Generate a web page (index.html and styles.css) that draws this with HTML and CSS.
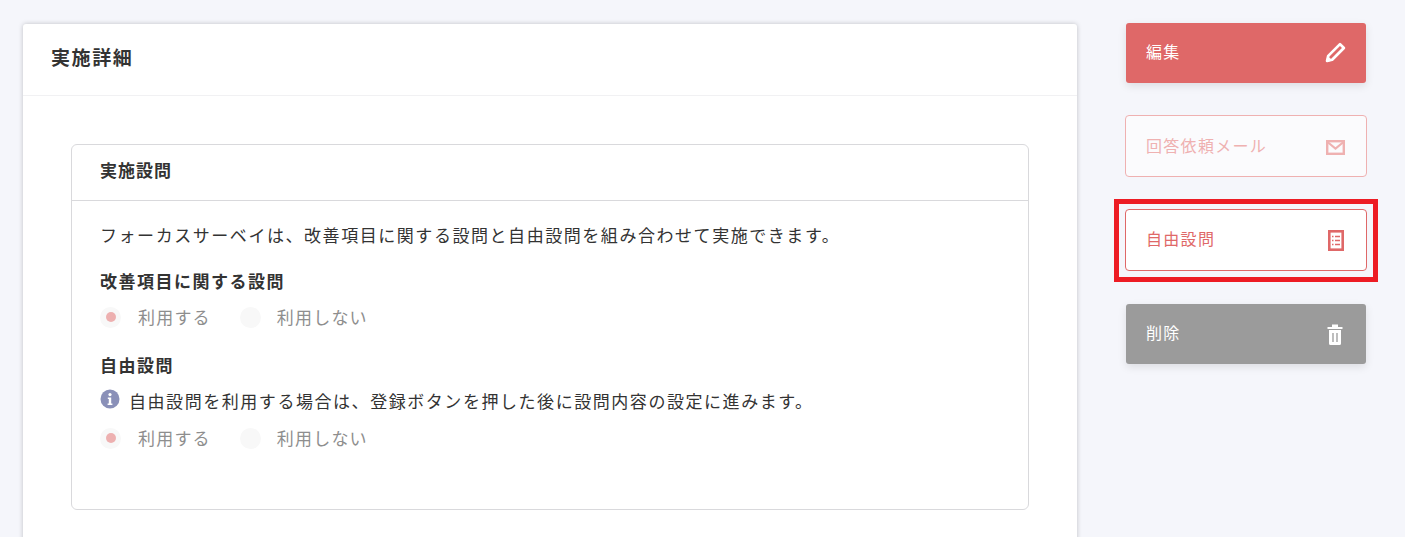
FILE: index.html
```html
<!DOCTYPE html>
<html lang="ja">
<head>
  <meta charset="UTF-8">
  <meta name="viewport" content="width=device-width, initial-scale=1.0">
  <title>実施詳細</title>
  <link rel="stylesheet" href="styles.css">
</head>
<body>
  <div class="page">
    <main class="card">
      <h1 class="card-title">実施詳細</h1>
      <div class="card-body">
        <section class="panel">
          <h2 class="panel-title">実施設問</h2>
          <div class="panel-body">
            <p class="lead">フォーカスサーベイは、改善項目に関する設問と自由設問を組み合わせて実施できます。</p>

            <h3 class="field-label">改善項目に関する設問</h3>
            <div class="radios">
              <span class="radio"><i class="dot checked"></i>利用する</span>
              <span class="radio"><i class="dot"></i>利用しない</span>
            </div>

            <h3 class="field-label second">自由設問</h3>
            <p class="note">
              <svg class="info-icon" viewBox="0 0 20 20" width="20" height="20">
                <circle cx="10" cy="10" r="9.5" fill="#8a90b8"/>
                <circle cx="10" cy="5.600" r="1.600" fill="#fff"/>
                <path d="M7.800 8.400h3.400v6h1.200v1.500H7.600v-1.500h1.200V9.900H7.800z" fill="#fff"/>
              </svg>
              自由設問を利用する場合は、登録ボタンを押した後に設問内容の設定に進みます。
            </p>
            <div class="radios">
              <span class="radio"><i class="dot checked"></i>利用する</span>
              <span class="radio"><i class="dot"></i>利用しない</span>
            </div>
          </div>
        </section>
      </div>
    </main>

    <aside class="actions">
      <a class="btn btn-edit">編集
        <svg viewBox="0 0 20 20" width="21" height="21">
          <path d="M14.300 2l3.700 3.700L6.800 16.900 2 18l1.100-4.800z" fill="none" stroke="#fff" stroke-width="2.600" stroke-linejoin="round"/>
          <path d="M1 19l1.300-6 4.700 4.700z" fill="#fff"/>
        </svg>
      </a>
      <a class="btn btn-mail">回答依頼メール
        <svg viewBox="0 0 19 15" width="19" height="15">
          <rect x="1.200" y="1.200" width="16.600" height="12.600" fill="none" stroke="#efb1b1" stroke-width="2.400"/>
          <path d="M1.500 2l8 6.500 8-6.500" fill="none" stroke="#efb1b1" stroke-width="2.200"/>
        </svg>
      </a>
      <div class="highlight">
        <a class="btn btn-free">自由設問
          <svg viewBox="0 0 16 21" width="16" height="21">
            <rect x="1.300" y="1.300" width="13.400" height="18.400" fill="none" stroke="#df6868" stroke-width="2.600"/>
            <path d="M4 6.500h1.500M4 10.500h1.500M4 14.500h1.500M7 6.500h5M7 10.500h5M7 14.500h5" stroke="#df6868" stroke-width="1.600"/>
          </svg>
        </a>
      </div>
      <a class="btn btn-delete">削除
        <svg viewBox="0 0 16 21" width="16" height="21">
          <path d="M0.500 3h15v2H.5zM5 .5h6V3H5z" fill="#fff"/>
          <path d="M2 6h12v13.500a1.500 1.500 0 0 1-1.500 1.500h-9A1.500 1.500 0 0 1 2 19.500z" fill="#fff"/>
          <path d="M6 9v9M10 9v9" stroke="#9b9b9b" stroke-width="1.300"/>
        </svg>
      </a>
    </aside>
  </div>
</body>
</html>
```

FILE: styles.css
```css
html, body {
  height: 100%;
  overflow: hidden;
}

body {
  margin: 0;
  font-family: "Noto Sans CJK JP", "Noto Sans", sans-serif;
  background-color: #f5f6fb;
  color: #333;
}

.page {
  display: flex;
  align-items: flex-start;
  padding: 23px 39px 0 23px;
}

.card {
  width: 1054px;
  flex-shrink: 0;
  margin-top: 1px;
  background-color: #fff;
  border-radius: 3px;
  box-shadow: 0 0 5px rgba(0, 0, 0, 0.22);
}

.card-title {
  margin: 0;
  height: 71px;
  padding-left: 28px;
  line-height: 66px;
  font-size: 19px;
  font-weight: 700;
  letter-spacing: 1.600px;
  border-bottom: 1px solid #f1f1f3;
}

.card-body {
  padding: 48px 48px 40px;
}

.panel {
  height: 364px;
  background-color: #fff;
  border: 1px solid #d9d9dc;
  border-radius: 6px;
}

.panel-title {
  margin: 0;
  height: 55px;
  padding-left: 28px;
  line-height: 49px;
  font-size: 17px;
  font-weight: 700;
  letter-spacing: 1px;
  border-bottom: 1px solid #d9d9dc;
}

.panel-body {
  padding: 22px 28px 0;
  font-size: 17px;
  letter-spacing: 1.550px;
}

.lead {
  margin: 0;
  line-height: 24px;
}

.field-label {
  margin: 22px 0 0;
  line-height: 24px;
  font-size: 17px;
  font-weight: 700;
  letter-spacing: 1.500px;
}

.field-label.second {
  margin-top: 24px;
}

.radios {
  display: flex;
  gap: 29px;
  margin-top: 12px;
  line-height: 24px;
  color: #8e8e8e;
  letter-spacing: 1.200px;
}

.radio {
  display: flex;
  align-items: center;
}

.dot {
  display: flex;
  align-items: center;
  justify-content: center;
  width: 21px;
  height: 21px;
  margin-right: 17px;
  background-color: #f8f8f8;
  border-radius: 50%;
}

.radio + .radio .dot {
  margin-right: 16px;
}

.dot.checked::after {
  content: "";
  width: 10px;
  height: 10px;
  background-color: #edb0b0;
  border-radius: 50%;
}

.note {
  display: flex;
  align-items: flex-start;
  margin: 12px 0 0;
  line-height: 24px;
  white-space: nowrap;
}

.info-icon {
  margin-right: 9px;
}

.note + .radios {
  margin-top: 13px;
}

.actions {
  display: flex;
  flex-direction: column;
  margin-left: 48px;
  width: 242px;
}

.btn {
  display: flex;
  align-items: center;
  justify-content: space-between;
  box-sizing: border-box;
  height: 60px;
  padding: 0 20px 4px;
  border-radius: 3px;
  font-size: 16px;
  letter-spacing: 1.300px;
}

.btn svg {
  margin-top: 4px;
}

.btn-edit {
  width: 240px;
  margin: 0 1px;
  color: #fff;
  background-color: #df6868;
  box-shadow: 0 3px 8px rgba(0, 0, 0, 0.1);
}

.btn-edit svg {
  margin-top: 2px;
}

.btn-mail {
  height: 62px;
  margin-top: 32px;
  padding: 0 21px 2px 20px;
  border-radius: 4px;
  color: #efb1b1;
  background-color: #fbfbfd;
  border: 1px solid #efb1b1;
}

.btn-mail svg {
  margin-top: 4px;
}

.highlight {
  margin: 22px -11px 0;
  padding: 5px 6px 6px;
  border: 5px solid #ed1c24;
}

.btn-free {
  height: 62px;
  padding-right: 22px;
  border-radius: 4px;
  color: #df6868;
  background-color: #fff;
  border: 1px solid #df6868;
}

.btn-delete {
  width: 240px;
  margin: 22px 1px 0;
  padding-right: 23px;
  color: #fff;
  background-color: #9b9b9b;
  box-shadow: 0 3px 8px rgba(0, 0, 0, 0.1);
}
```
